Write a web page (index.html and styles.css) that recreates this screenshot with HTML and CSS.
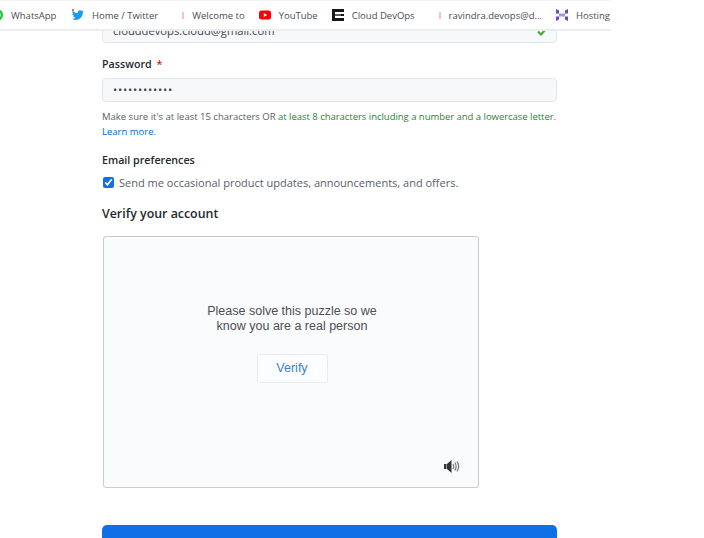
FILE: index.html
```html
<!DOCTYPE html>
<html lang="en">
<head>
    <meta charset="UTF-8">
    <meta name="viewport" content="width=device-width, initial-scale=1.0">
    <title>Join GitHub</title>
    <link rel="stylesheet" href="styles.css">
</head>
<body>
    <!-- Bookmarks bar -->
    <div class="bookmarks">
        <a class="bookmark first" href="#">
            <svg class="icon" viewBox="0 0 12 12"><circle cx="6" cy="6" r="6" fill="#25c03c"/><circle cx="6" cy="6" r="3.6" fill="#fff"/><circle cx="6" cy="6" r="2.4" fill="#25c03c"/></svg>
            WhatsApp
        </a>
        <a class="bookmark" href="#">
            <svg class="icon" viewBox="0 0 24 24"><path fill="#1d9bf0" d="M23.6 4.6c-.9.4-1.800.6-2.800.8 1-.6 1.800-1.500 2.100-2.700-.9.6-2 1-3.100 1.200A4.900 4.900 0 0 0 11.500 8.400C7.400 8.200 3.800 6.300 1.400 3.300c-1.300 2.200-.7 5.100 1.500 6.500-.8 0-1.600-.2-2.200-.6 0 2.300 1.600 4.400 3.900 4.900-.7.200-1.500.2-2.200.1.600 2 2.400 3.400 4.600 3.400A9.900 9.900 0 0 1 0 19.600 13.900 13.900 0 0 0 21.500 7.200c1-.7 1.800-1.600 2.100-2.600z"/><circle cx="2" cy="2" r="2" fill="#e0245e"/></svg>
            Home / Twitter
        </a>
        <a class="bookmark" href="#">
            <span class="icon tick-slot"><span class="tick"></span></span>
            Welcome to
        </a>
        <a class="bookmark" href="#">
            <svg class="icon" viewBox="0 0 12 12"><rect y="1.500" width="12" height="9" rx="2.500" fill="#f00"/><path fill="#fff" d="M4.800 4v4l3.400-2z"/></svg>
            YouTube
        </a>
        <a class="bookmark" href="#">
            <svg class="icon" viewBox="0 0 12 12"><rect width="12" height="12" fill="#15181c"/><rect x="3" y="3" width="9" height="2" fill="#fff"/><rect x="3" y="7" width="9" height="2" fill="#fff"/><rect x="3" y="5" width="6" height="2" fill="#5d6063"/></svg>
            Cloud DevOps
        </a>
        <a class="bookmark" href="#">
            <span class="icon tick-slot"><span class="tick"></span></span>
            ravindra.devops@d...
        </a>
        <a class="bookmark" href="#">
            <svg class="icon" viewBox="0 0 12 12"><path fill="#a591e6" d="M3 4.500h6v3H3z"/><path fill="#6747c7" d="M0 0l3 1.500V4.500H0zM9 1.500L12 0v4.500H9zM0 7.500h3v3L0 12zM9 7.500h3V12l-3-1.500z"/></svg>
            Hosting
        </a>
    </div>

    <!-- Signup form -->
    <form class="signup">
        <div class="field">
            <input class="text-input" type="email" value="clouddevops.cloud@gmail.com">
            <svg class="valid-check" viewBox="0 0 10 8"><path fill="none" stroke="#4aa82e" stroke-width="2" d="M1 3.500l3 3 5-5.500"/></svg>
        </div>

        <label class="field-label" for="password">Password <span class="required">*</span></label>
        <input class="text-input password-input" type="password" id="password" value="cloudDevops1">

        <p class="hint">Make sure it's at least 15 characters OR <span class="hint-ok">at least 8 characters including a number and a lowercase letter.</span><br><a href="#">Learn more.</a></p>

        <h4 class="prefs-title">Email preferences</h4>
        <label class="prefs-row">
            <input type="checkbox" checked>
            Send me occasional product updates, announcements, and offers.
        </label>

        <h3 class="verify-title">Verify your account</h3>
        <div class="puzzle">
            <p>Please solve this puzzle so we<br>know you are a real person</p>
            <button type="button" class="verify-btn">Verify</button>
            <svg class="speaker" viewBox="0 0 17 13">
                <path fill="#333" d="M0 4h2.500v5H0zM3 4l4.500-4v13L3 9z"/>
                <path fill="none" stroke="#777" stroke-width="1.200" d="M9 4c.8 1.500.8 3.500 0 5M11 2.500c1.400 2.500 1.400 5.500 0 8M13 1.500c2 3 2 7 0 10"/>
            </svg>
        </div>

        <button type="submit" class="submit" aria-label="Create account"></button>
    </form>
</body>
</html>
```

FILE: styles.css
```css
/* Basic page styling */
html, body {
    height: 538px;
    overflow: hidden;
}

body {
    margin: 0;
    background-color: white;
    font-family: "Open Sans", sans-serif;
    color: #24292e;
}

/* Bookmarks bar sits over the scrolled page */
.bookmarks {
    position: absolute;
    top: 0;
    left: 0;
    z-index: 1;
    box-sizing: border-box;
    width: 611px;
    height: 31px;
    display: flex;
    align-items: center;
    gap: 14px;
    overflow: hidden;
    background-color: white;
    border-top: 1px solid #f4f4f4;
    border-bottom: 2px solid #ebecee;
    white-space: nowrap;
}

.bookmark {
    display: flex;
    align-items: center;
    gap: 8px;
    flex-shrink: 0;
    font-size: 9.500px;
    color: #4a4d52;
    text-decoration: none;
}

.bookmark.first {
    margin-left: -9px;
    margin-right: 1.500px;
}

.icon {
    width: 12px;
    height: 12px;
    flex-shrink: 0;
}

.tick-slot {
    display: flex;
    justify-content: flex-end;
    align-items: center;
}

.tick {
    width: 2px;
    height: 7px;
    background-color: #f9c0c6;
}

/* Form column */
.signup {
    box-sizing: border-box;
    width: 455px;
    margin-left: 102px;
    padding-top: 18px;
    display: flex;
    flex-direction: column;
}

.field {
    position: relative;
}

.text-input {
    box-sizing: border-box;
    width: 100%;
    height: 24px;
    padding: 0 10px;
    background-color: #f6f8fa;
    border: 1px solid #e4e7ea;
    border-radius: 4px;
    font-family: "Open Sans", sans-serif;
    font-size: 11.200px;
    color: #3d4248;
}

.password-input {
    letter-spacing: 0.800px;
}

.valid-check {
    position: absolute;
    top: 10px;
    right: 10px;
    width: 10px;
    height: 8px;
}

.field-label {
    margin-top: 14px;
    margin-bottom: 6px;
    font-size: 10.700px;
    font-weight: 600;
    line-height: 15px;
}

.required {
    margin-left: 2px;
    color: #cb2431;
}

.hint {
    margin: 7px -6px 0 0;
    font-size: 9.500px;
    line-height: 15px;
    color: #586069;
}

.hint-ok {
    letter-spacing: -0.030px;
    color: #22863a;
}

.hint a {
    color: #0366d6;
    text-decoration: none;
}

.prefs-title {
    margin: 14px 0 0;
    font-size: 10.700px;
    font-weight: 600;
    line-height: 15px;
}

.prefs-row {
    margin-top: 7px;
    display: flex;
    align-items: center;
    gap: 5px;
    font-size: 11px;
    line-height: 15px;
    color: #586069;
}

.prefs-row input {
    width: 11px;
    height: 11px;
    margin: 0 0 0 1px;
    accent-color: #0f6fe6;
}

.verify-title {
    margin: 15px 0 0;
    font-size: 12.400px;
    font-weight: 600;
    line-height: 17px;
}

/* Puzzle box */
.puzzle {
    position: relative;
    box-sizing: border-box;
    width: 376px;
    height: 252px;
    margin: 14px 0 0 1px;
    padding: 67px 0 0 2px;
    display: flex;
    flex-direction: column;
    align-items: center;
    background-color: #fafbfd;
    border: 1px solid #c9cbcd;
    border-radius: 3px;
    font-family: "Liberation Sans", Arial, sans-serif;
}

.puzzle p {
    margin: 0;
    font-size: 12.500px;
    line-height: 15px;
    text-align: center;
    color: #4c4f53;
}

.verify-btn {
    width: 71px;
    height: 29px;
    margin-top: 20px;
    background-color: #fcfdfe;
    border: 1px solid #e9ebee;
    border-radius: 2px;
    font-family: "Liberation Sans", Arial, sans-serif;
    font-size: 12.500px;
    color: #3b7fd0;
}

.speaker {
    position: absolute;
    left: 340px;
    top: 223px;
    width: 17px;
    height: 13px;
}

.submit {
    height: 13px;
    margin-top: 37px;
    flex-shrink: 0;
    background-color: #0f6fe6;
    border: none;
    border-radius: 5px 5px 0 0;
}
```
